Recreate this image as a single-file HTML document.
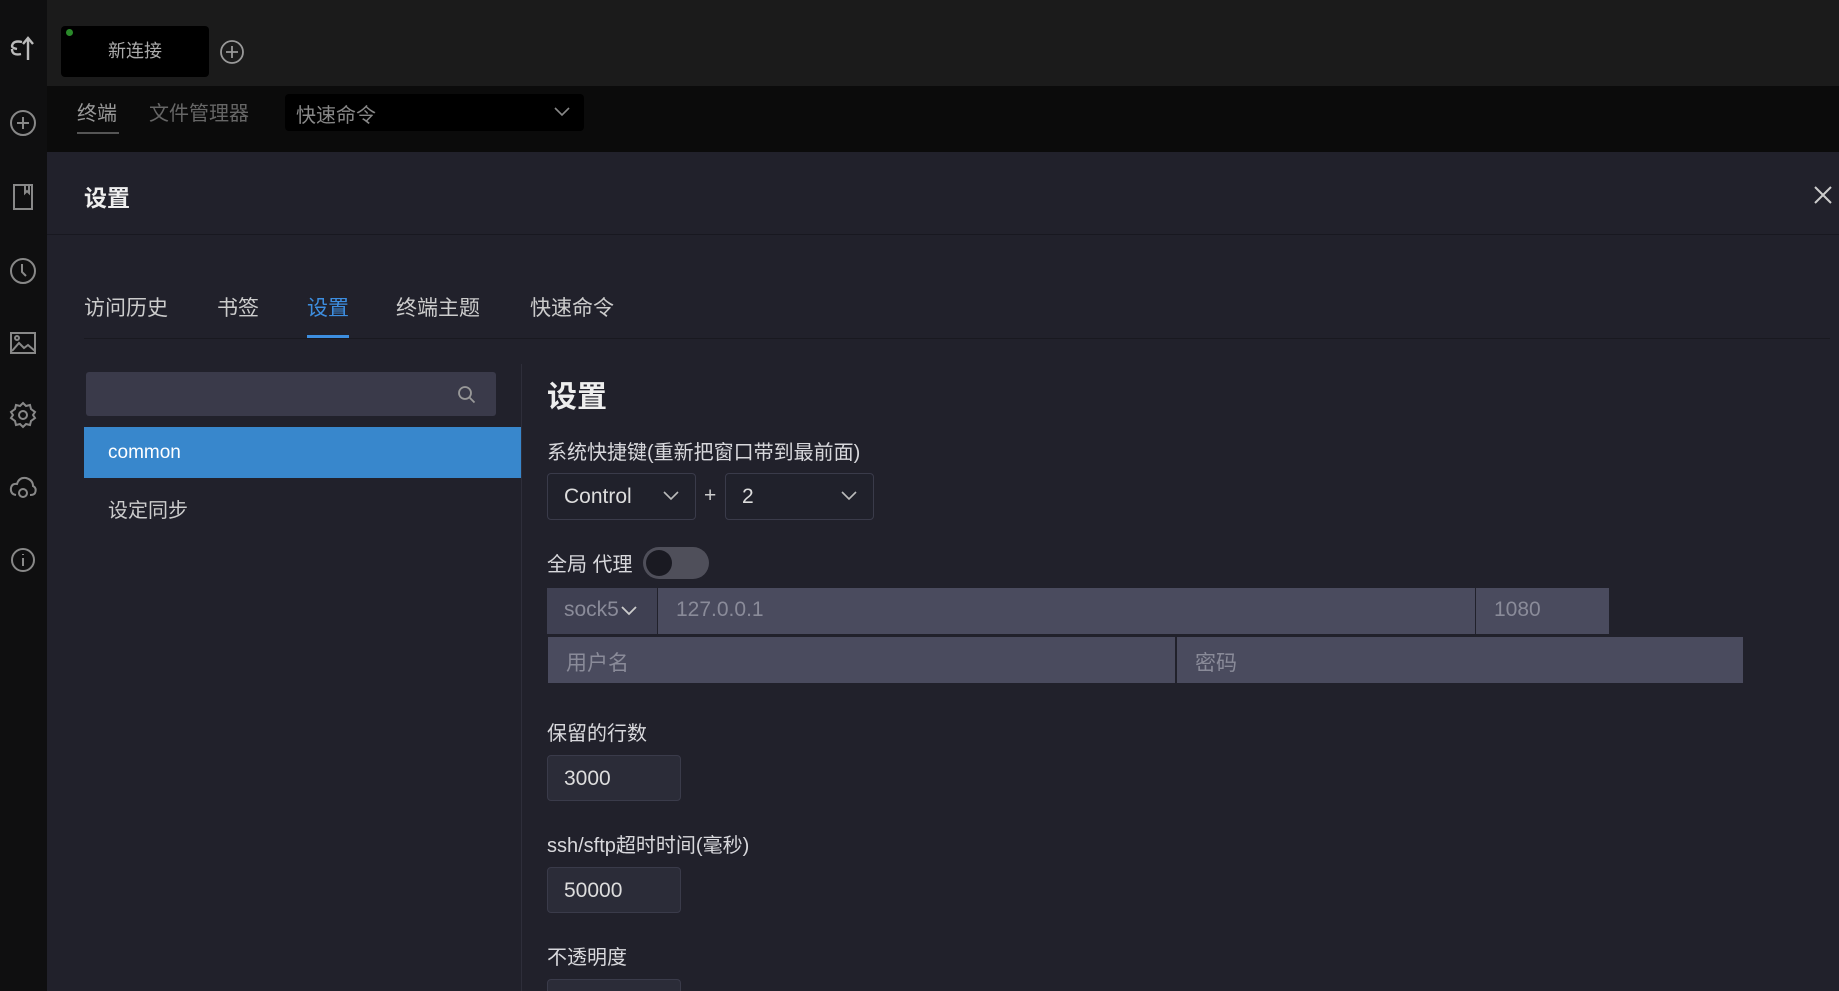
<!DOCTYPE html>
<html style="overflow:hidden;width:1839px;height:991px"><head><meta charset="utf-8"><style>
*{box-sizing:border-box;margin:0;padding:0}
body{width:1839px;height:991px;overflow:hidden;background:#1b1b1b;font-family:"Liberation Sans","Noto Sans CJK SC",sans-serif;color:#ddd}
#w{position:relative;width:1839px;height:991px;overflow:hidden}
.a{position:absolute}
.side{left:0;top:0;width:47px;height:991px;background:#0f0f10}
.ic{position:absolute;left:8px;width:30px;height:30px}
.lbl{position:absolute;left:547px;font-size:20px;color:#d8d8dc}
.sel{position:absolute;height:47px;border:1px solid #3a3b4a;border-radius:4px;background:#20212b;font-size:21px;color:#ddd;padding:11px 16px}
.inp{position:absolute;background:#4a4b5e;color:#8a8b99;font-size:21px;padding:10px 18px;height:46px}
.chev{position:absolute;right:16px;top:17px}
</style></head><body><div id="w">
<div class="a side"></div>
<div class="a" style="left:47px;top:86px;width:1792px;height:66px;background:#0b0b0b"></div>
<svg class="ic" style="top:34px" viewBox="0 0 30 30" fill="none" stroke="#bbb" stroke-width="2.4"><path d="M14 8 Q5 6 4 12 Q4 14 9 15 M4 15 Q4 22 13 20"/><path d="M20 26V6 M15 10L20 4L25 10"/></svg>
<svg class="ic" style="top:108px" viewBox="0 0 30 30" fill="none" stroke="#888" stroke-width="2"><circle cx="15" cy="15" r="12"/><path d="M15 9v12M9 15h12"/></svg>
<svg class="ic" style="top:182px" viewBox="0 0 30 30" fill="none" stroke="#888" stroke-width="2"><rect x="6" y="3" width="18" height="24"/><path d="M17 3v8l2-2 2 2V3"/></svg>
<svg class="ic" style="top:256px" viewBox="0 0 30 30" fill="none" stroke="#888" stroke-width="2"><circle cx="15" cy="15" r="12"/><path d="M14 8v8l4 4"/></svg>
<svg class="ic" style="top:328px" viewBox="0 0 30 30" fill="none" stroke="#888" stroke-width="2"><rect x="3" y="5" width="24" height="20"/><path d="M4 23l7-8 5 5 4-3 7 6"/><circle cx="9" cy="10" r="2"/></svg>
<svg class="ic" style="top:400px" viewBox="0 0 30 30" fill="none" stroke="#888" stroke-width="2"><circle cx="15" cy="15" r="4"/><path d="M15 3l3 3 4-1 1 4 4 3-2 3 2 3-4 3-1 4-4-1-3 3-3-3-4 1-1-4-4-3 2-3-2-3 4-3 1-4 4 1z"/></svg>
<svg class="ic" style="top:473px" viewBox="0 0 30 30" fill="none" stroke="#888" stroke-width="2"><path d="M8 22 Q2 21 3 15 Q4 10 9 11 Q11 4 18 5 Q25 7 25 13 Q29 15 27 20 Q26 22 22 22"/><circle cx="15" cy="20" r="4"/></svg>
<svg class="ic" style="top:545px" viewBox="0 0 30 30" fill="none" stroke="#888" stroke-width="2"><circle cx="15" cy="15" r="11"/><path d="M15 13v8M15 9v1"/></svg>
<div class="a" style="left:61px;top:26px;width:148px;height:51px;background:#000;border-radius:4px;font-size:18px;color:#aaa;text-align:center;line-height:51px">新连接</div>
<div class="a" style="left:66px;top:29px;width:7px;height:7px;border-radius:50%;background:#2a8a2a"></div>
<svg class="a" style="left:219px;top:39px" width="26" height="26" viewBox="0 0 26 26" fill="none" stroke="#999" stroke-width="1.8"><circle cx="13" cy="13" r="11"/><path d="M13 7v12M7 13h12"/></svg>
<div class="a" style="left:77px;top:97px;font-size:20px;color:#999">终端</div>
<div class="a" style="left:77px;top:132px;width:42px;height:2px;background:#555"></div>
<div class="a" style="left:149px;top:97px;font-size:20px;color:#666">文件管理器</div>
<div class="a" style="left:285px;top:94px;width:299px;height:37px;background:#000;border-radius:4px;font-size:20px;color:#888;padding:5px 11px">快速命令<svg style="position:absolute;right:14px;top:13px" width="16" height="10" viewBox="0 0 16 10" fill="none" stroke="#888" stroke-width="1.6"><path d="M1 1l7 7 7-7"/></svg></div>
<div class="a" style="left:47px;top:152px;width:1792px;height:839px;background:#21212b"></div>
<div class="a" style="left:47px;top:234px;width:1792px;height:1px;background:#181820"></div>
<div class="a" style="left:84px;top:179px;font-size:23px;font-weight:bold;color:#eee">设置</div>
<svg class="a" style="left:1814px;top:186px" width="18" height="18" viewBox="0 0 18 18" stroke="#ccc" stroke-width="2"><path d="M1 1l16 16M17 1L1 17"/></svg>
<div class="a" style="left:84px;top:292px;font-size:21px;color:#ccc;white-space:nowrap">访问历史</div>
<div class="a" style="left:217px;top:292px;font-size:21px;color:#ccc">书签</div>
<div class="a" style="left:307px;top:292px;font-size:21px;color:#3d8ee0">设置</div>
<div class="a" style="left:396px;top:292px;font-size:21px;color:#ccc">终端主题</div>
<div class="a" style="left:530px;top:292px;font-size:21px;color:#ccc">快速命令</div>
<div class="a" style="left:84px;top:338px;width:1746px;height:1px;background:#191920"></div>
<div class="a" style="left:307px;top:335px;width:42px;height:3px;background:#3d8ee0"></div>
<div class="a" style="left:86px;top:372px;width:410px;height:44px;background:#3a3a4a;border-radius:3px"></div>
<svg class="a" style="left:456px;top:384px" width="22" height="22" viewBox="0 0 22 22" fill="none" stroke="#999" stroke-width="1.8"><circle cx="9" cy="9" r="6"/><path d="M13.5 13.5l5 5"/></svg>
<div class="a" style="left:84px;top:427px;width:437px;height:51px;background:#3887cc;font-size:19px;color:#fff;padding:15px 24px">common</div>
<div class="a" style="left:108px;top:494px;font-size:20px;color:#ccc">设定同步</div>
<div class="a" style="left:521px;top:364px;width:1px;height:627px;background:#2e2e3a"></div>
<div class="a" style="left:547px;top:372px;font-size:30px;font-weight:bold;color:#eee">设置</div>
<div class="lbl" style="top:436px">系统快捷键(重新把窗口带到最前面)</div>
<div class="sel" style="left:547px;top:473px;width:149px">Control<svg class="chev" width="16" height="10" viewBox="0 0 16 10" fill="none" stroke="#bbb" stroke-width="1.6"><path d="M1 1l7 7 7-7"/></svg></div>
<div class="a" style="left:704px;top:484px;font-size:21px;color:#ccc">+</div>
<div class="sel" style="left:725px;top:473px;width:149px">2<svg class="chev" width="16" height="10" viewBox="0 0 16 10" fill="none" stroke="#bbb" stroke-width="1.6"><path d="M1 1l7 7 7-7"/></svg></div>
<div class="lbl" style="top:548px">全局 代理</div>
<div class="a" style="left:643px;top:547px;width:66px;height:32px;border-radius:16px;background:#4f4f5a"></div>
<div class="a" style="left:646px;top:550px;width:26px;height:26px;border-radius:50%;background:#1a1a22"></div>
<div class="inp" style="left:547px;top:588px;width:110px;background:#3f4052;padding-left:17px">sock5<svg style="margin-left:2px" width="16" height="10" viewBox="0 0 16 10" fill="none" stroke="#ccc" stroke-width="1.8"><path d="M1 1l7 7 7-7"/></svg></div>
<div class="inp" style="left:658px;top:588px;width:817px">127.0.0.1</div>
<div class="inp" style="left:1476px;top:588px;width:133px">1080</div>
<div class="inp" style="left:548px;top:637px;width:627px">用户名</div>
<div class="inp" style="left:1177px;top:637px;width:566px">密码</div>
<div class="lbl" style="top:717px">保留的行数</div>
<div class="sel" style="left:547px;top:755px;width:134px;height:46px;background:#2b2c38">3000</div>
<div class="lbl" style="top:829px">ssh/sftp超时时间(毫秒)</div>
<div class="sel" style="left:547px;top:867px;width:134px;height:46px;background:#2b2c38">50000</div>
<div class="lbl" style="top:941px">不透明度</div>
<div class="sel" style="left:547px;top:979px;width:134px;height:46px;background:#2b2c38"></div>
</div></body></html>
